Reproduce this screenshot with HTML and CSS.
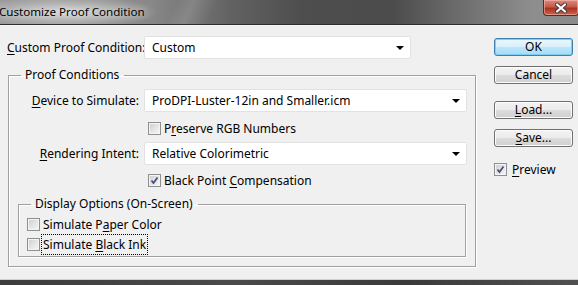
FILE: index.html
```html
<!DOCTYPE html>
<html>
<head>
  <title>Customize Proof Condition</title>
  <link rel="stylesheet" href="styles.css">
</head>
<body>

<div class="window">
  <div class="titlebar">
    <span class="title">Customize Proof Condition</span>
    <span class="close-btn">
      <svg width="20" height="12" viewBox="0 0 20 12">
        <path d="M6 2.5 L14 9.5 M14 2.5 L6 9.5" stroke="#3a3a3a" stroke-width="4" stroke-linecap="round"/>
        <path d="M6 2.5 L14 9.5 M14 2.5 L6 9.5" stroke="#ffffff" stroke-width="2.2" stroke-linecap="round"/>
      </svg>
    </span>
  </div>

  <div class="dialog">
    <div class="main">
      <div class="top-row">
        <label class="top-label"><u>C</u>ustom Proof Condition:</label>
        <div class="select select-short"><span>Custom</span><span class="arrow"></span></div>
      </div>

      <fieldset class="group proof-group">
        <legend>Proof Conditions</legend>

        <div class="field-row">
          <label class="field-label"><u>D</u>evice to Simulate:</label>
          <div class="select"><span>ProDPI-Luster-12in and Smaller.icm</span><span class="arrow"></span></div>
        </div>
        <div class="check-row indent">
          <span class="box"></span><span>P<u>r</u>eserve RGB Numbers</span>
        </div>

        <div class="field-row row-render">
          <label class="field-label"><u>R</u>endering Intent:</label>
          <div class="select"><span>Relative Colorimetric</span><span class="arrow"></span></div>
        </div>
        <div class="check-row indent row-bpc">
          <span class="box checked"></span><span>Black Point <u>C</u>ompensation</span>
        </div>

        <fieldset class="group display-group">
          <legend>Display Options (On-Screen)</legend>
          <div class="check-row inner">
            <span class="box"></span><span>Simulate P<u>a</u>per Color</span>
          </div>
          <div class="check-row inner row-ink">
            <span class="box"></span><span class="focused">Simulate <u>B</u>lack Ink</span>
          </div>
        </fieldset>
      </fieldset>
    </div>

    <div class="side">
      <button class="btn btn-default">OK</button>
      <button class="btn btn-cancel">Cancel</button>
      <button class="btn btn-load"><u>L</u>oad...</button>
      <button class="btn btn-save"><u>S</u>ave...</button>
      <div class="check-row preview-row">
        <span class="box checked"></span><span><u>P</u>review</span>
      </div>
    </div>
  </div>

  <div class="bottom-edge"></div>
</div>

</body>
</html>
```

FILE: styles.css
```css
body {
  margin: 0;
  font-family: "Noto Sans", "Open Sans", sans-serif;
  font-size: 12px;
  color: #000;
  background-color: #f0f0f0;
}

.window {
  width: 578px;
  height: 285px;
  overflow: hidden;
  display: flex;
  flex-direction: column;
  background-color: #f0f0f0;
}

label,
.check-row span {
  white-space: nowrap;
}

/* title bar */
.titlebar {
  height: 24px;
  flex: none;
  display: flex;
  align-items: flex-start;
  justify-content: space-between;
  border-bottom: 1px solid #2e2e2e;
  background:
    radial-gradient(ellipse 90px 17px at 68px 12px, rgba(235, 235, 235, 0.75), rgba(235, 235, 235, 0) 100%),
    linear-gradient(115deg, rgba(255,255,255,0) 0, rgba(255,255,255,0) 30%, rgba(255,255,255,0.12) 33%, rgba(255,255,255,0) 37%),
    linear-gradient(90deg, #9a9a9a 0, #888 26%, #626262 40%, #4e4e4e 52%, #4c4c4c 68%, #6e6e6e 80%, #8e8e8e 92%, #8a8a8a 100%);
}

.title {
  margin-left: -1px;
  line-height: 23px;
  font-size: 11.6px;
  text-shadow: 0 0 6px rgba(255, 255, 255, 0.9);
}

.close-btn {
  width: 36px;
  height: 16px;
  flex: none;
  margin-right: -1px;
  display: flex;
  align-items: center;
  justify-content: center;
  box-sizing: border-box;
  border: 1px solid #5a2a22;
  border-top: none;
  border-radius: 0 0 4px 4px;
  background: linear-gradient(#dc8a7e 0, #c55a48 45%, #a93222 55%, #c8654f 100%);
  box-shadow: inset 0 0 0 1px rgba(255, 200, 190, 0.5);
}

/* dialog body */
.dialog {
  flex: 1;
  display: flex;
  border-top: 1px solid #f7f7f7;
}

.main {
  width: 476px;
  flex: none;
}

.top-row {
  display: flex;
  align-items: center;
  margin-top: 10px;
  padding-left: 7px;
}

.top-label {
  width: 137px;
  flex: none;
}

u {
  text-decoration-thickness: 1px;
  text-underline-offset: 2px;
}

.select {
  height: 23px;
  box-sizing: border-box;
  display: flex;
  align-items: center;
  justify-content: space-between;
  padding: 0 7px;
  background-color: #fff;
  border: 1px solid #e2e2e2;
  border-radius: 2px;
}

.select-short {
  width: 267px;
}

.arrow {
  width: 0;
  height: 0;
  border-left: 4px solid transparent;
  border-right: 4px solid transparent;
  border-top: 4px solid #000;
  margin-right: -1px;
}

/* groups */
.group {
  margin: 0;
  padding: 0;
  min-width: 0;
  border: 1px solid #a0a0a0;
  box-shadow: inset 1px 1px 0 #fff, 1px 1px 0 #fff;
}

.group legend {
  line-height: 16px;
  padding: 0 5px 0 4px;
}

.proof-group {
  margin: 8px 0 0 8px;
  width: 468px;
  box-sizing: border-box;
  padding-bottom: 9px;
}

.proof-group > legend {
  margin-left: 12px;
}

.field-row {
  display: grid;
  grid-template-columns: 130px 323px;
  column-gap: 5px;
  align-items: center;
  margin-top: 6px;
}

.field-label {
  text-align: right;
}

.row-render {
  margin-top: 6px;
}

.check-row {
  display: flex;
  align-items: center;
  height: 16px;
  margin-top: 8px;
}

.check-row.indent {
  padding-left: 139px;
}

.row-bpc {
  margin-top: 7px;
}

.box {
  width: 13px;
  height: 13px;
  box-sizing: border-box;
  flex: none;
  margin-right: 3px;
  border: 1px solid #8e8f8f;
  background: linear-gradient(135deg, #cdcdcd 0, #e6e6e6 55%, #f7f7f7 100%);
  box-shadow: inset 0 0 0 1px #f4f4f4;
}

.box.checked {
  background:
    url("data:image/svg+xml;utf8,<svg xmlns='http://www.w3.org/2000/svg' width='11' height='11'><path d='M2.5 5.5 L4.5 8 L8.5 2.5' fill='none' stroke='%23404f7a' stroke-width='1.7'/></svg>") center / 11px 11px no-repeat,
    linear-gradient(135deg, #cdcdcd 0, #e6e6e6 55%, #f7f7f7 100%);
}

.display-group {
  margin: 8px 9px 0 9px;
  padding-bottom: 4px;
}

.display-group > legend {
  margin-left: 12px;
}

.check-row.inner {
  padding-left: 8px;
  margin-top: 4px;
}

.focused {
  outline: 1px dotted #000;
  outline-offset: 1px;
}

/* buttons */
.side {
  margin-left: 18px;
  width: 79px;
  display: flex;
  flex-direction: column;
}

.btn {
  height: 18px;
  width: 79px;
  padding: 0;
  font-family: inherit;
  font-size: 12px;
  color: #000;
  line-height: 14px;
  border: 1px solid #707070;
  border-radius: 3px;
  background: linear-gradient(#f3f3f3 0, #ebebeb 50%, #dddddd 50%, #cfcfcf 100%);
  box-shadow: inset 0 0 0 1px #fcfcfc;
}

.btn-default {
  margin-top: 12px;
  border-color: #3c7fb1;
  background: linear-gradient(#eaf6fd 0, #d9f0fc 50%, #bee6fd 50%, #a7d9f5 100%);
  box-shadow: inset 0 0 0 1px #7fd0f0;
}

.btn-cancel {
  margin-top: 10px;
}

.btn-load {
  margin-top: 17px;
}

.btn-save {
  margin-top: 10px;
}

.preview-row {
  margin-top: 14px;
}

.preview-row .box {
  margin-right: 5px;
}

.bottom-edge {
  height: 5px;
  flex: none;
  border-top: 1px solid #d0d0d0;
  background: linear-gradient(90deg, #3c3c3c, #4a4a4a 40%, #3a3a3a 70%, #505050);
}
```
